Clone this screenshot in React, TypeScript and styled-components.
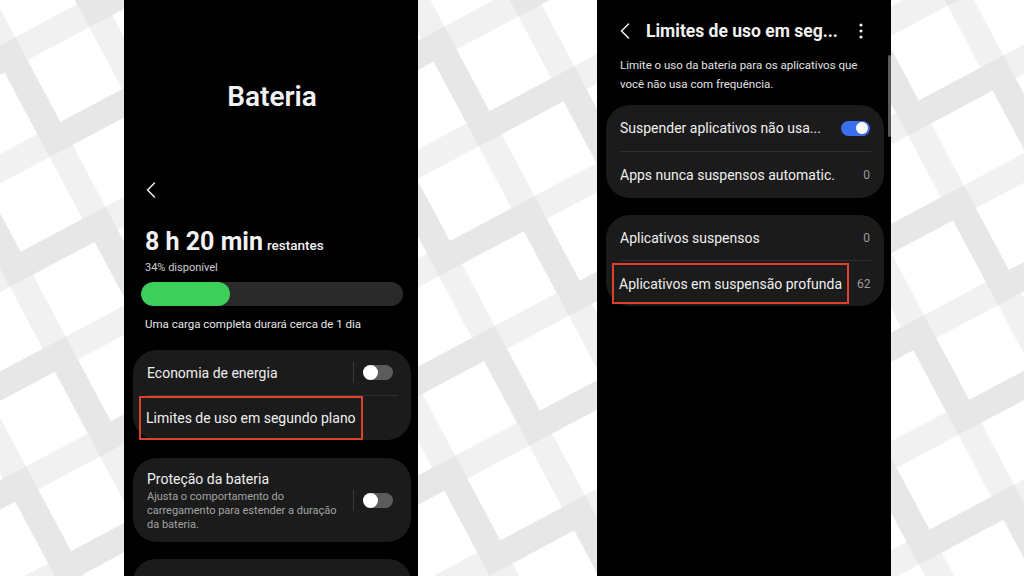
import React from 'react'
import styled, { createGlobalStyle } from 'styled-components'

// woven light-grey background, drawn as a rotated svg pattern
const P = 96
const W = 26
const LIGHT = '#f1f1f1'
const DARK = '#e7e7e7'
const cells = [0, 1]
  .flatMap((i) => [0, 1].map((j) => [i, j]))
  .map(([i, j]) => {
    const even = (i + j) % 2 === 0
    const h = `<rect x='${i * P}' y='${j * P}' width='${P + (even ? W : 0)}' height='${W}' fill='${even ? LIGHT : DARK}'/>`
    const v = `<rect x='${i * P}' y='${j * P}' width='${W}' height='${P + (even ? 0 : W)}' fill='${even ? DARK : LIGHT}'/>`
    return even ? h + v : v + h
  })
  .join('')

const pattern = `<svg xmlns='http://www.w3.org/2000/svg' width='1024' height='576'><defs><pattern id='p' width='${2 * P}' height='${2 * P}' patternUnits='userSpaceOnUse' patternTransform='rotate(-28) translate(-30 40)'><rect width='${2 * P}' height='${2 * P}' fill='#ffffff'/>${cells}</pattern></defs><rect width='1024' height='576' fill='url(#p)'/></svg>`

const GlobalStyle = createGlobalStyle`
  html, body {
    margin: 0;
    padding: 0;
    width: 1024px;
    height: 576px;
    overflow: hidden;
  }
  body {
    font-family: Roboto, "Noto Sans", sans-serif;
    background: #fff url("data:image/svg+xml;utf8,${encodeURIComponent(pattern)}") no-repeat;
  }
`

const Page = styled.div`
  display: flex;
  height: 576px;
  padding-left: 124px;
  gap: 179px;
`

const Screen = styled.div`
  position: relative;
  width: 294px;
  height: 576px;
  background: #000;
  color: #f2f2f2;
  display: flex;
  flex-direction: column;
  padding: 0 7px 0 9px;
  box-sizing: border-box;
  overflow: hidden;

  > * {
    flex-shrink: 0;
  }
`

const BigTitle = styled.h1`
  margin: 0;
  height: 160px;
  padding-top: 80px;
  box-sizing: border-box;
  text-align: center;
  font-size: 28px;
  font-weight: 600;
  line-height: 34px;
`

const BackRow = styled.div`
  height: 44px;
  margin-top: 8px;
  display: flex;
  align-items: center;
  padding-left: 13px;
  color: #eee;
`

const Remaining = styled.div`
  margin-top: 16px;
  padding-left: 12px;
  display: flex;
  align-items: baseline;
  gap: 4px;

  > b {
    font-size: 25px;
    font-weight: 700;
    line-height: 28px;
  }

  > span {
    font-size: 13.5px;
    font-weight: 500;
  }
`

const Small = styled.div<{ $top?: number }>`
  padding-left: 12px;
  margin-top: ${(p) => p.$top ?? 0}px;
  font-size: 11px;
  line-height: 16px;
  color: #cfcfcf;
`

const Bar = styled.div`
  margin: 6px 8px 0 8px;
  height: 24px;
  border-radius: 12px;
  background: #2a2a2a;
  overflow: hidden;
`

const Fill = styled.div`
  height: 100%;
  border-radius: 12px;
  background: #3ccf5a;
`

const Note = styled.div`
  margin-top: 10px;
  padding-left: 12px;
  font-size: 11.5px;
  line-height: 16px;
  color: #e6e6e6;
`

const Card = styled.div<{ $top: number }>`
  margin-top: ${(p) => p.$top}px;
  background: #1b1b1b;
  border-radius: 24px;
  padding: 0 13px 0 14px;
`

const Row = styled.div<{ $h?: number }>`
  display: flex;
  align-items: center;
  min-height: ${(p) => p.$h ?? 45}px;
  gap: 8px;
`

const Label = styled.div`
  flex: 1;
  min-width: 0;
  font-size: 14px;
  line-height: 18px;
  color: #f0f0f0;
  white-space: nowrap;
  overflow: hidden;
  text-overflow: ellipsis;
`

const TwoLine = styled.div`
  flex: 1;
  padding: 12px 0 10px;

  > div {
    font-size: 14px;
    line-height: 18px;
    color: #f0f0f0;
  }

  > p {
    margin: 2px 0 0;
    font-size: 11px;
    line-height: 14px;
    color: #a3a3a3;
  }
`

const Highlight = styled.div<{ $h: number }>`
  height: ${(p) => p.$h}px;
  margin-left: -8px;
  padding: 0 5px;
  border: 2px solid #e2402f;
  box-sizing: border-box;
  display: flex;
  align-items: center;
  font-size: 14px;
  color: #f0f0f0;
  white-space: nowrap;
`

const Divider = styled.div`
  height: 1px;
  background: #2f2f2f;
`

const VLine = styled.div`
  width: 1px;
  height: 21px;
  background: #3a3a3a;
  margin-right: 1px;
`

const Track = styled.div<{ $on?: boolean }>`
  width: ${(p) => (p.$on ? 29 : 30)}px;
  height: 15px;
  border-radius: 8px;
  background: ${(p) => (p.$on ? '#3b6ff0' : '#5c5c5c')};
  display: flex;
  align-items: center;
  justify-content: ${(p) => (p.$on ? 'flex-end' : 'flex-start')};
  padding: 0 1px;
  box-sizing: border-box;
  margin-right: ${(p) => (p.$on ? 1 : 5)}px;
  flex-shrink: 0;

  &::after {
    content: '';
    width: ${(p) => (p.$on ? 12 : 15)}px;
    height: ${(p) => (p.$on ? 12 : 15)}px;
    margin: 0 ${(p) => (p.$on ? 1 : -1)}px;
    border-radius: 50%;
    background: #fff;
  }
`

const Count = styled.span`
  margin-left: auto;
  font-size: 12px;
  color: #9c9c9c;
  padding-right: 1px;
`

const Header = styled.div`
  height: 56px;
  padding: 6px 21px 0 14px;
  box-sizing: border-box;
  display: flex;
  align-items: center;
  gap: 16px;

  > h2 {
    flex: 1;
    margin: 0;
    font-size: 17.5px;
    font-weight: 700;
    line-height: 22px;
    white-space: nowrap;
  }
`

const Desc = styled.p`
  margin: 0;
  padding: 0 14px 0 14px;
  font-size: 11.5px;
  line-height: 19px;
  color: #e2e2e2;
`

const Scrollbar = styled.div`
  position: absolute;
  right: 0;
  top: 55px;
  width: 3px;
  height: 82px;
  border-radius: 2px;
  background: #5a5a5a;
`

const Chevron = () => (
  <svg width="10" height="16" viewBox="0 0 10 16" fill="none">
    <path d="M8.5 1L1.5 8L8.5 15" stroke="currentColor" strokeWidth="1.5" strokeLinecap="round" strokeLinejoin="round" />
  </svg>
)

const Kebab = () => (
  <svg width="4" height="16" viewBox="0 0 4 16" fill="#f0f0f0">
    <circle cx="2" cy="2" r="1.6" />
    <circle cx="2" cy="8" r="1.6" />
    <circle cx="2" cy="14" r="1.6" />
  </svg>
)

const BatteryScreen = () => (
  <Screen>
    <BigTitle>Bateria</BigTitle>
    <BackRow>
      <Chevron />
    </BackRow>
    <Remaining>
      <b>8 h 20 min</b>
      <span>restantes</span>
    </Remaining>
    <Small $top={4}>34% disponível</Small>
    <Bar>
      <Fill style={{ width: '34%' }} />
    </Bar>
    <Note>Uma carga completa durará cerca de 1 dia</Note>
    <Card $top={18}>
      <Row>
        <Label>Economia de energia</Label>
        <VLine />
        <Track />
      </Row>
      <Divider />
      <Row $h={44}>
        <Highlight $h={44}>Limites de uso em segundo plano</Highlight>
      </Row>
    </Card>
    <Card $top={18}>
      <Row>
        <TwoLine>
          <div>Proteção da bateria</div>
          <p>
            Ajusta o comportamento do
            <br />
            carregamento para estender a duração
            <br />
            da bateria.
          </p>
        </TwoLine>
        <VLine />
        <Track />
      </Row>
    </Card>
    <Card $top={17}>
      <Row>
        <Label>Mais configurações da bateria</Label>
      </Row>
    </Card>
  </Screen>
)

const LimitsScreen = () => (
  <Screen>
    <Header>
      <Chevron />
      <h2>Limites de uso em seg...</h2>
      <Kebab />
    </Header>
    <Desc>
      Limite o uso da bateria para os aplicativos que
      <br />
      você não usa com frequência.
    </Desc>
    <Card $top={11}>
      <Row $h={46}>
        <Label>Suspender aplicativos não usa...</Label>
        <Track $on />
      </Row>
      <Divider />
      <Row $h={46}>
        <Label>Apps nunca suspensos automatic.</Label>
        <Count>0</Count>
      </Row>
    </Card>
    <Card $top={17}>
      <Row $h={45}>
        <Label>Aplicativos suspensos</Label>
        <Count>0</Count>
      </Row>
      <Divider />
      <Row $h={45}>
        <Highlight $h={41}>Aplicativos em suspensão profunda</Highlight>
        <Count>62</Count>
      </Row>
    </Card>
    <Scrollbar />
  </Screen>
)

export default function App() {
  return (
    <>
      <GlobalStyle />
      <Page>
        <BatteryScreen />
        <LimitsScreen />
      </Page>
    </>
  )
}
